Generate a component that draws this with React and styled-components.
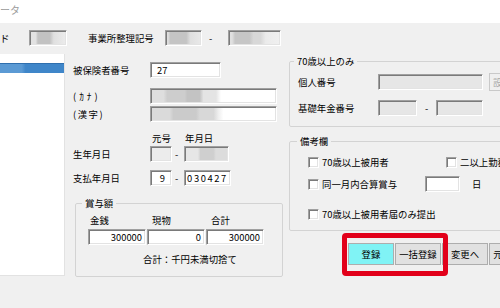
import React from 'react';
import styled, { createGlobalStyle, css } from 'styled-components';

const GlobalStyle = createGlobalStyle`
  html, body { margin: 0; padding: 0; }
  body {
    width: 500px; height: 308px; overflow: hidden;
    background: #f0f0f0;
    font-family: "Noto Sans CJK JP", "Noto Sans", sans-serif;
    font-size: 9.4px; color: #000;
  }
`;

const sunken = css`
  box-sizing: border-box;
  border-style: solid;
  border-width: 1px;
  border-color: #a0a0a0 #ffffff #ffffff #a0a0a0;
  box-shadow: inset 1px 1px 0 #7a7a7a, inset -1px -1px 0 #e3e3e3;
`;

const Window = styled.div`
  width: 500px; height: 308px; overflow: hidden;
  display: flex; flex-direction: column;
`;

const TitleBar = styled.div`
  height: 23px; flex-shrink: 0; background: #fff;
  color: #9a9a9a; font-size: 10px; line-height: 12px;
  padding-top: 4px; box-sizing: border-box;
`;

const Body = styled.div`
  flex: 1; background: #f0f0f0; padding-top: 7px;
  display: flex; flex-direction: column;
`;

const HeaderRow = styled.div`
  display: flex; align-items: center; height: 16px;
`;

const Caption = styled.span`
  display: inline-block; flex-shrink: 0;
  width: ${p => p.$w}px; padding-left: ${p => p.$pl || 0}px;
  box-sizing: border-box; line-height: 11px; white-space: nowrap;
  letter-spacing: ${p => p.$ls || 0}px;
`;

const TextBox = styled.div`
  ${sunken};
  flex-shrink: 0;
  width: ${p => p.$w}px; height: 16px;
  background: ${p => p.$bg || '#fff'};
  display: flex; align-items: center;
  justify-content: ${p => p.$align || 'flex-start'};
  padding: 0 ${p => p.$pr || 0}px 0 ${p => p.$pl || 0}px;
  line-height: 11px; white-space: nowrap;
  letter-spacing: ${p => p.$ls || 0}px;
`;

const Dash = styled.span`
  display: inline-block; flex-shrink: 0;
  width: ${p => p.$w}px; padding-left: ${p => p.$pl || 0}px;
  box-sizing: border-box; line-height: 11px;
`;

const Main = styled.div`
  display: flex; margin-top: 8px;
`;

const ListPanel = styled.div`
  width: 65px; height: 222px; flex-shrink: 0;
  background: #fff; box-sizing: border-box;
  border-right: 1px solid #e2e2e2; border-bottom: 1px solid #e2e2e2;
  padding-top: 9px;
`;

const ListItem = styled.div`
  height: 10px; box-sizing: border-box;
  border-top: 1px solid #2f6fae;
  background: linear-gradient(90deg, #5b9ad4 0 34%, #3f86c9 40% 100%);
`;

const MiddleCol = styled.div`
  width: 210px; margin-left: 8px; flex-shrink: 0;
  display: flex; flex-direction: column;
`;

const RightCol = styled.div`
  width: 246px; margin-left: 6px; flex-shrink: 0;
  display: flex; flex-direction: column;
`;

const FormRow = styled.div`
  display: flex; align-items: center;
  height: ${p => p.$h || 16}px;
  margin-top: ${p => p.$mt || 0}px;
  margin-left: ${p => p.$ml || 0}px;
`;

const Group = styled.fieldset`
  margin: ${p => p.$mt || 0}px 0 0 ${p => p.$ml || 0}px;
  width: ${p => p.$w}px; box-sizing: border-box;
  border: 1px solid #d3d3d3; border-radius: 2px;
  padding: 0 0 ${p => p.$pb || 0}px ${p => p.$pl || 0}px;
  min-inline-size: 0;
`;

const Legend = styled.legend`
  padding: 0 3px; margin-left: ${p => p.$ml || 0}px;
  line-height: 11px; font-size: 9.4px;
`;

const AmountGrid = styled.div`
  display: grid; grid-template-columns: repeat(3, 58px); column-gap: 1px;
`;

const AmountLabel = styled.span`
  padding-left: ${p => p.$pl}px; line-height: 11px; margin-top: 6px;
`;

const AmountBox = styled(TextBox)`
  margin-top: 3px;
`;

const Note = styled.div`
  margin: 9px 0 0 55px; line-height: 11px; white-space: nowrap;
`;

const SideButton = styled.button`
  box-sizing: border-box; width: 40px; height: 18px;
  margin: 0 0 0 6px; padding: 0 0 0 3px; flex-shrink: 0;
  background: #efefef; border: 1px solid #c9c9c9;
  font: inherit; color: #a8a8a8; text-align: left;
`;

const CheckItem = styled.label`
  display: flex; align-items: center; flex-shrink: 0;
  width: ${p => (p.$w ? `${p.$w}px` : 'auto')};
  line-height: 11px; white-space: nowrap;
`;

const Check = styled.span`
  ${sunken};
  display: inline-block; width: 11px; height: 11px;
  background: #fff; margin-right: 3px; flex-shrink: 0;
`;

const ButtonRow = styled.div`
  position: relative;
  display: flex; gap: 1px;
  margin: 12px 0 0 59px;
`;

const Button = styled.button`
  box-sizing: border-box; flex-shrink: 0;
  width: 46px; height: 22px; margin: 0; padding: 0;
  background: ${p => (p.$primary ? '#80f3f5' : '#e1e1e1')};
  border: 1px solid #adadad;
  font: inherit; color: #000; white-space: nowrap; overflow: hidden;
`;

const Highlight = styled.div`
  position: absolute; left: -6px; top: -10px;
  width: 106px; height: 43px; box-sizing: border-box;
  border: 5px solid #e2001a; border-radius: 4px;
  pointer-events: none;
`;

const G = {
  head1: 'linear-gradient(90deg, #e2e2e2 0 16%, #c2c2c2 22% 55%, #e0e0e0 66%, #ececec 100%)',
  head2: 'linear-gradient(90deg, #dedede 0 6%, #c4c4c4 12% 58%, #e0e0e0 70%, #e9e9e9 100%)',
  head3: 'linear-gradient(90deg, #e0e0e0 0 6%, #c6c6c6 12% 40%, #d8d8d8 48% 62%, #ebebeb 72%, #f0f0f0 100%)',
  kana: 'linear-gradient(90deg, #dedede 0 10%, #cdcdcd 13% 27%, #c3c3c3 29% 39%, #e4e4e4 42% 52%, #fff 56%)',
  kanji: 'linear-gradient(90deg, #dadada 0 15%, #cbcbcb 18% 36%, #d8d8d8 39% 50%, #efefef 54%, #fff 58%)',
  birth: 'linear-gradient(90deg, #e6e6e6 0 30%, #cfcfcf 36% 66%, #dcdcdc 72% 100%)',
};

export default function App() {
  return (
    <>
      <GlobalStyle />
      <Window>
        <TitleBar>ータ</TitleBar>
        <Body>
          <HeaderRow>
            <Caption $w={29}>ド</Caption>
            <TextBox $w={38} $bg={G.head1} />
            <Caption $w={21} />
            <Caption $w={77}>事業所整理記号</Caption>
            <TextBox $w={37} $bg={G.head2} />
            <Dash $w={26} $pl={7}>-</Dash>
            <TextBox $w={53} $bg={G.head3} />
          </HeaderRow>

          <Main>
            <ListPanel>
              <ListItem />
            </ListPanel>

            <MiddleCol>
              <FormRow $mt={8}>
                <Caption $w={77}>被保険者番号</Caption>
                <TextBox $w={71} $pl={6}>27</TextBox>
              </FormRow>
              <FormRow $mt={10}>
                <Caption $w={77} $ls={3}>(ｶﾅ)</Caption>
                <TextBox $w={127} $bg={G.kana} />
              </FormRow>
              <FormRow $mt={2}>
                <Caption $w={77} $ls={1.5}>(漢字)</Caption>
                <TextBox $w={127} $bg={G.kanji} />
              </FormRow>
              <FormRow $mt={11} $h={11}>
                <Caption $w={79} />
                <Caption $w={33}>元号</Caption>
                <Caption $w={40}>年月日</Caption>
              </FormRow>
              <FormRow $mt={2}>
                <Caption $w={77}>生年月日</Caption>
                <TextBox $w={22} $bg="#ececec" />
                <Dash $w={12} $pl={3}>-</Dash>
                <TextBox $w={45} $bg={G.birth} />
              </FormRow>
              <FormRow $mt={8}>
                <Caption $w={77}>支払年月日</Caption>
                <TextBox $w={22} $align="flex-end" $pr={6}>9</TextBox>
                <Dash $w={12} $pl={3}>-</Dash>
                <TextBox $w={47} $align="center" $ls={1.6}>030427</TextBox>
              </FormRow>

              <Group $w={208} $ml={2} $mt={12} $pl={12} $pb={11}>
                <Legend $ml={-6}>賞与額</Legend>
                <AmountGrid>
                  <AmountLabel $pl={2}>金銭</AmountLabel>
                  <AmountLabel $pl={5}>現物</AmountLabel>
                  <AmountLabel $pl={5}>合計</AmountLabel>
                  <AmountBox $w={58} $align="flex-end" $pr={3}>300000</AmountBox>
                  <AmountBox $w={58} $align="flex-end" $pr={3}>0</AmountBox>
                  <AmountBox $w={58} $align="flex-end" $pr={3}>300000</AmountBox>
                </AmountGrid>
                <Note>合計：千円未満切捨て</Note>
              </Group>
            </MiddleCol>

            <RightCol>
              <Group $w={246} $mt={2} $pl={8} $pb={10}>
                <Legend $ml={-4}>70歳以上のみ</Legend>
                <FormRow $mt={6} $h={18}>
                  <Caption $w={80}>個人番号</Caption>
                  <TextBox $w={105} $bg="#e6e6e6" />
                  <SideButton type="button" disabled>設定</SideButton>
                </FormRow>
                <FormRow $mt={9}>
                  <Caption $w={80}>基礎年金番号</Caption>
                  <TextBox $w={39} $bg="#e6e6e6" />
                  <Dash $w={19} $pl={8}>-</Dash>
                  <TextBox $w={47} $bg="#e6e6e6" />
                </FormRow>
              </Group>

              <Group $w={246} $mt={9} $pl={8} $pb={10}>
                <Legend $ml={-1}>備考欄</Legend>
                <FormRow $mt={9} $h={12} $ml={10}>
                  <CheckItem $w={138}><Check />70歳以上被用者</CheckItem>
                  <CheckItem><Check />二以上勤務者</CheckItem>
                </FormRow>
                <FormRow $mt={8} $ml={10}>
                  <CheckItem $w={117}><Check />同一月内合算賞与</CheckItem>
                  <TextBox $w={35} />
                  <Caption $w={30} $pl={12}>日</Caption>
                </FormRow>
                <FormRow $mt={16} $h={12} $ml={10}>
                  <CheckItem><Check />70歳以上被用者届のみ提出</CheckItem>
                </FormRow>
              </Group>

              <ButtonRow>
                <Button type="button" $primary>登録</Button>
                <Button type="button">一括登録</Button>
                <Button type="button">変更へ</Button>
                <Button type="button">元に戻す</Button>
                <Highlight />
              </ButtonRow>
            </RightCol>
          </Main>
        </Body>
      </Window>
    </>
  );
}
